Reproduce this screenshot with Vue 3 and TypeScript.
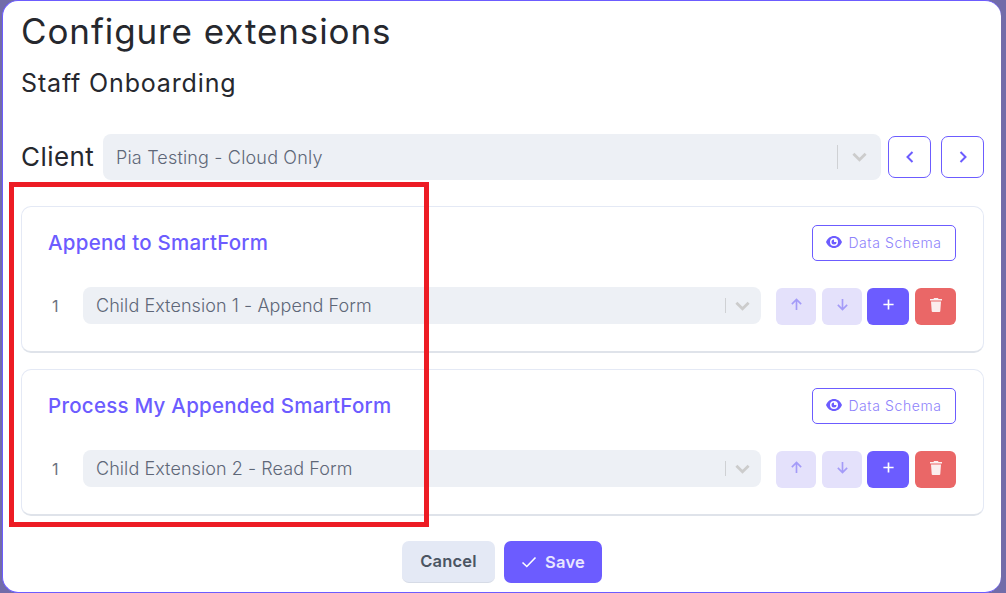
<script setup lang="ts">
interface Ext { title: string; child: string }
const extensions: Ext[] = [
  { title: 'Append to SmartForm', child: 'Child Extension 1 - Append Form' },
  { title: 'Process My Appended SmartForm', child: 'Child Extension 2 - Read Form' },
]
</script>

<template>
  <div class="page">
    <div class="modal">
      <h1 class="title">Configure extensions</h1>
      <h2 class="subtitle">Staff Onboarding</h2>

      <div class="client-row">
        <span class="client-label">Client</span>
        <div class="select client-select">
          <span class="select-text">Pia Testing - Cloud Only</span>
          <span class="sep"></span>
          <svg class="caret" viewBox="0 0 16 10"><path d="M1.500 1.500 8 8l6.500-6.500" /></svg>
        </div>
        <button class="nav nav-first">
          <svg viewBox="0 0 10 14"><path d="M7.500 2 2.500 7l5 5" /></svg>
        </button>
        <button class="nav">
          <svg viewBox="0 0 10 14"><path d="M2.500 2l5 5-5 5" /></svg>
        </button>
      </div>

      <section v-for="ext in extensions" :key="ext.title" class="card">
        <div class="card-head">
          <h3 class="card-title">{{ ext.title }}</h3>
          <button class="schema">
            <svg class="eye" viewBox="0 0 16 12">
              <path fill-rule="evenodd" d="M8 0C4.500 0 1.500 2.300 0 6c1.500 3.700 4.500 6 8 6s6.500-2.300 8-6c-1.500-3.700-4.500-6-8-6Zm0 10a4 4 0 1 1 0-8 4 4 0 0 1 0 8Z" />
              <path d="M8 3.500a2.500 2.500 0 1 0 2.500 2.500H8V3.500Z" />
            </svg>
            Data Schema
          </button>
        </div>
        <div class="item-row">
          <span class="num">1</span>
          <div class="select item-select">
            <span class="select-text item-text">{{ ext.child }}</span>
            <span class="sep"></span>
            <svg class="caret" viewBox="0 0 16 10"><path d="M1.500 1.500 8 8l6.500-6.500" /></svg>
          </div>
          <div class="actions">
            <button class="act soft up">
              <svg viewBox="0 0 14 14"><path d="M7 13V1.800M2 6.500 7 1.500l5 5" /></svg>
            </button>
            <button class="act soft down">
              <svg viewBox="0 0 14 14"><path d="M7 1v11.200M2 7.500l5 5 5-5" /></svg>
            </button>
            <button class="act add">
              <svg viewBox="0 0 14 14"><path d="M7 1.500v11M1.500 7h11" /></svg>
            </button>
            <button class="act del">
              <svg viewBox="0 0 12 14"><path class="fill" d="M4 0h4l.5 1H12v1.500H0V1h3.500L4 0ZM1 3.500h10l-.7 9.500a1 1 0 0 1-1 1H2.700a1 1 0 0 1-1-1L1 3.500Z" /></svg>
            </button>
          </div>
        </div>
      </section>

      <footer class="footer">
        <button class="btn cancel">Cancel</button>
        <button class="btn save">
          <svg viewBox="0 0 16 12"><path d="M1.500 6.500 5.800 10.500 14.500 1.500" /></svg>
          Save
        </button>
      </footer>
    </div>
    <div class="annotation"></div>
  </div>
</template>

<style>
html, body { margin: 0; background: #726ca9; }
</style>

<style scoped>
.page {
  position: relative;
  width: 1006px;
  height: 593px;
  overflow: hidden;
  background: #726ca9;
  font-family: Inter, "Noto Sans", sans-serif;
  box-sizing: border-box;
  padding-left: 2px;
}
.modal {
  box-sizing: border-box;
  width: 999px;
  height: 593px;
  background: #fff;
  border: 1px solid #6c5cff;
  border-width: 1px 0 1px 1px;
  border-radius: 16px;
  padding: 0 17px 0 18px;
  display: flex;
  flex-direction: column;
}
.title {
  margin: 8px 0 0;
  font-size: 35px;
  line-height: 44px;
  font-weight: 400;
  color: #26282e;
  letter-spacing: 0.9px;
}
.subtitle {
  margin: 14px 0 0;
  font-size: 25px;
  line-height: 32px;
  font-weight: 400;
  color: #26282e;
  letter-spacing: 0.85px;
}
.client-row {
  display: flex;
  align-items: center;
  margin-top: 35px;
  height: 46px;
}
.client-label {
  font-size: 26px;
  color: #26282e;
  width: 82px;
  letter-spacing: 0.45px;
  padding-bottom: 2px;
}
.select {
  box-sizing: border-box;
  display: flex;
  align-items: center;
  background: #edf0f5;
  border-radius: 8px;
}
.client-select {
  width: 778px;
  height: 46px;
  padding-left: 13px;
}
.select-text {
  flex: 1;
  color: #5e6778;
  font-size: 18px;
  font-weight: 300;
  letter-spacing: 0.17px;
}
.item-text { letter-spacing: 0.07px; }
.sep {
  width: 1px;
  height: 24px;
  background: #cfd1d4;
}
.caret {
  width: 15px;
  height: 10px;
  margin: 0 14px 0 14px;
  fill: none;
  stroke: #cccccc;
  stroke-width: 3;
}
.nav {
  box-sizing: border-box;
  width: 43px;
  height: 42px;
  margin-left: 10px;
  padding: 0 0 1px;
  background: #fff;
  border: 1px solid #6c5cff;
  border-radius: 7px;
  display: flex;
  align-items: center;
  justify-content: center;
}
.nav-first { margin-left: 7px; }
.nav svg {
  width: 10px;
  height: 14px;
  fill: none;
  stroke: #6c5cff;
  stroke-width: 2;
}
.card {
  box-sizing: border-box;
  height: 147px;
  margin-top: 26px;
  padding: 18px 27px 0 26px;
  border: 1px solid #e4e9f5;
  border-bottom: 2px solid #dfe3ea;
  border-radius: 10px;
}
.card + .card { margin-top: 16px; }
.card-head {
  display: flex;
  align-items: center;
  justify-content: space-between;
  height: 36px;
}
.card-title {
  margin: 0;
  padding-bottom: 2px;
  font-size: 20.500px;
  font-weight: 500;
  color: #6c5cff;
  letter-spacing: 0.25px;
}
.schema {
  box-sizing: border-box;
  width: 144px;
  height: 36px;
  padding: 0 0 2px;
  display: flex;
  align-items: center;
  justify-content: center;
  gap: 6px;
  background: #fff;
  border: 1px solid #6c5cff;
  border-radius: 5px;
  color: #8e82fb;
  font-family: inherit;
  font-size: 14px;
  font-weight: 300;
  letter-spacing: 0.6px;
}
.eye {
  width: 16px;
  height: 12px;
  fill: #6c5cff;
}
.item-row {
  display: flex;
  align-items: center;
  margin-top: 26px;
  height: 37px;
}
.num {
  width: 35px;
  padding-left: 4px;
  box-sizing: border-box;
  font-size: 16px;
  font-weight: 400;
  color: #6b7280;
}
.item-select {
  width: 678px;
  height: 37px;
  padding-left: 13px;
}
.item-select .sep { height: 15px; }
.item-select .caret { margin: 0 11px 0 9px; }
.actions {
  display: flex;
  margin-left: 15px;
  height: 37px;
  padding-top: 1px;
}
.act {
  box-sizing: border-box;
  height: 37px;
  padding: 0 0 3px;
  border: 0;
  border-radius: 6px;
  display: flex;
  align-items: center;
  justify-content: center;
}
.act svg {
  width: 13px;
  height: 13px;
  fill: none;
  stroke-width: 1.800;
}
.soft { width: 40px; background: #e4e1fb; }
.soft svg { stroke: #a49bf8; }
.down { margin-left: 6px; }
.add {
  width: 42px;
  margin-left: 5px;
  background: #6c5cff;
}
.add svg { stroke: #fff; stroke-width: 1.800; }
.del {
  width: 41px;
  margin-left: 6px;
  background: #ea6767;
}
.act.del svg { width: 12px; height: 14px; }
.del .fill { fill: #fbeeee; stroke: none; }
.footer {
  display: flex;
  justify-content: center;
  gap: 9px;
  margin-top: 25px;
  padding-right: 1px;
}
.btn {
  box-sizing: border-box;
  height: 42px;
  padding: 0 0 1px;
  border: 0;
  border-radius: 7px;
  font-family: inherit;
  font-size: 16.500px;
  font-weight: 600;
  letter-spacing: 0.2px;
  display: flex;
  align-items: center;
  justify-content: center;
}
.cancel {
  width: 93px;
  background: #e4e9f5;
  color: #4b5563;
  border-bottom: 1px solid #d6dbe6;
}
.save {
  width: 98px;
  gap: 8px;
  background: #6c5cff;
  color: #e9e6ff;
}
.save svg {
  width: 16px;
  height: 12px;
  fill: none;
  stroke: #fff;
  stroke-width: 1.600;
}
.annotation {
  position: absolute;
  left: 9px;
  top: 182px;
  width: 420px;
  height: 345px;
  box-sizing: border-box;
  border: 5px solid #ed1c24;
  pointer-events: none;
}
</style>
